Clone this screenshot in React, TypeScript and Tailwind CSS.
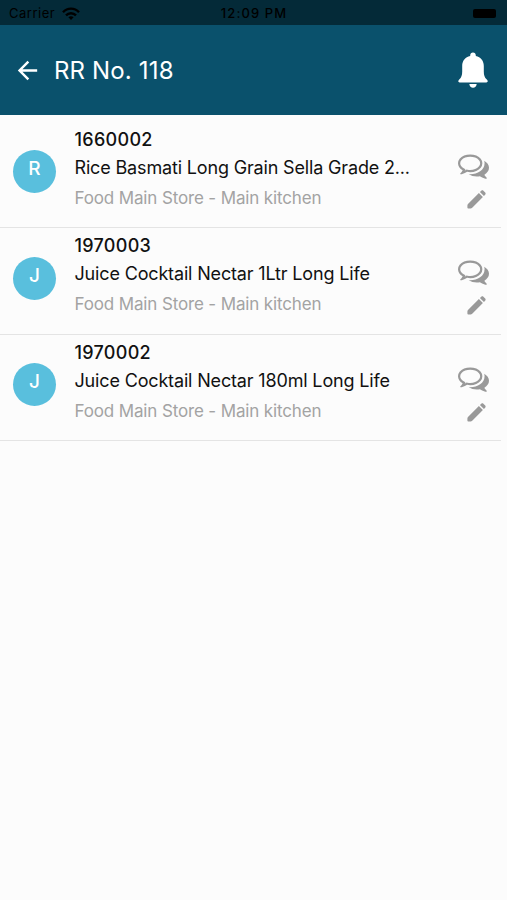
import { MdArrowBack } from "react-icons/md";

type Item = {
  code: string;
  name: string;
  route: string;
};

const items: Item[] = [
  { code: "1660002", name: "Rice Basmati Long Grain Sella Grade 2...", route: "Food Main Store - Main kitchen" },
  { code: "1970003", name: "Juice Cocktail Nectar 1Ltr Long Life", route: "Food Main Store - Main kitchen" },
  { code: "1970002", name: "Juice Cocktail Nectar 180ml Long Life", route: "Food Main Store - Main kitchen" },
];

function WifiIcon() {
  return (
    <svg width="18" height="13" viewBox="0 0 18 13" fill="none" stroke="currentColor" strokeWidth="2.4">
      <path d="M1 5.2C5.5 0.4 12.5 0.4 17 5.2" />
      <path d="M4 8.4C6.8 5.5 11.2 5.5 14 8.4" />
      <path d="M9 13L6.4 10.3C7.8 9 10.2 9 11.6 10.3Z" fill="currentColor" stroke="none" />
    </svg>
  );
}

function BellIcon() {
  return (
    <svg width="30" height="36" viewBox="0 0 30 36" fill="currentColor">
      <path d="M15 0.4C13.3 0.4 12.2 1.6 12.2 3.2V4.1C7.2 5.2 4.2 9 4.2 14V19.5C4.2 23.3 3.5 25.3 1.2 27.6C0.5 28.3 0.3 28.8 0.3 29.3C0.3 30 0.9 30.4 1.6 30.4H28.4C29.1 30.4 29.7 30 29.7 29.3C29.7 28.8 29.5 28.3 28.8 27.6C26.5 25.3 25.8 23.3 25.8 19.5V14C25.8 9 22.8 5.2 17.8 4.1V3.2C17.8 1.6 16.7 0.4 15 0.4Z" />
      <path d="M11.3 32H18.7C18.5 34.2 17 35.7 15 35.7C13 35.7 11.5 34.2 11.3 32Z" />
    </svg>
  );
}

function CommentsIcon() {
  return (
    <svg width="31" height="31" viewBox="0 0 1792 1792" fill="currentColor">
      <path d="M704 384q-153 0-286 52t-211.5 141-78.5 191q0 82 53 158t149 132l97 56-35 84q34-20 62-39l44-31 53 10q78 14 153 14 153 0 286-52t211.5-141 78.5-191-78.5-191-211.5-141-286-52zm0-128q191 0 353.5 68.5t256.5 186.5 94 257-94 257-256.5 186.5-353.5 68.5q-86 0-176-16-124 88-278 128-36 9-86 16h-3q-11 0-20.5-8t-11.5-21q-1-3-1-6.5t.5-6.5 2-6l2.5-5 3.5-5.5 4-5 4.5-5 4-4.5q5-6 23-25t26-29.5 22.5-29 25-38.5 20.5-44q-124-72-195-177t-71-224q0-139 94-257t256.5-186.5 353.5-68.5zm822 1169q10 24 20.5 44t25 38.5 22.5 29 26 29.5 23 25q1 1 4 4.5t4.5 5 4 5 3.5 5.5l2.5 5 2 6 .5 6.5-1 6.5q-3 14-13 22t-22 7q-50-7-86-16-154-40-278-128-90 16-176 16-271 0-472-132 58 4 88 4 161 0 309-45t264-129q125-92 192-212t67-254q0-77-23-152 129 71 204 178t75 230q0 120-71 224.5t-195 176.5z" />
    </svg>
  );
}

function PencilIcon() {
  return (
    <svg width="19" height="19" viewBox="0 0 19 19" fill="currentColor" className="mt-[9px] ml-[6px]">
      <path d="M11.9 3.1L15.9 7.1L5.2 17.8C4.7 18.3 4.2 18.6 3.6 18.6H1.6C0.9 18.6 0.4 18.1 0.4 17.4V15.4C0.4 14.8 0.7 14.3 1.2 13.8Z" />
      <path d="M12.9 2.1L14.3 0.8C14.9 0.2 15.8 0.2 16.4 0.8L18.2 2.6C18.8 3.2 18.8 4.1 18.2 4.7L16.9 6.1Z" />
    </svg>
  );
}

function StatusBar() {
  return (
    <div className="grid h-[25px] grid-cols-3 items-center bg-[#042a38] px-[9px] pt-[2px] text-[13px] text-black">
      <div className="flex items-center gap-[7px]">
        <span className="tracking-[0.5px]">Carrier</span>
        <WifiIcon />
      </div>
      <span className="pl-px text-center font-medium tracking-[1.1px]">12:09 PM</span>
      <div className="flex justify-end pr-[2px]">
        <div className="h-[9px] w-[23px] rounded-[2px] bg-black" />
      </div>
    </div>
  );
}

function ItemRow({ item }: { item: Item }) {
  return (
    <li className="mr-[6px] flex h-[106.67px] border-b border-[#e4e4e4] pl-[13px]">
      <div className="mt-[28.4px] flex size-[43px] shrink-0 items-center justify-center rounded-full bg-[#59bfdd] pb-[4px] text-[19px] font-medium text-white">
        {item.name[0]}
      </div>
      <div className="ml-[18.5px] min-w-0 flex-1 whitespace-nowrap pt-[4px]">
        <p className="text-[18px] leading-[28px] font-medium tracking-[0.3px] text-[#111]">{item.code}</p>
        <p className="text-[18px] leading-[28px] tracking-[-0.16px] text-[#111]">{item.name}</p>
        <p className="text-[17px] leading-[32px] tracking-[-0.14px] text-[#a3a3a3]">{item.route}</p>
      </div>
      <div className="mr-[12px] flex w-[31px] shrink-0 flex-col items-center pt-[28px] text-[#999]">
        <CommentsIcon />
        <PencilIcon />
      </div>
    </li>
  );
}

export default function App() {
  return (
    <div className="min-h-screen bg-[#fcfcfc] font-[Inter,sans-serif]">
      <StatusBar />
      <header className="flex h-[90px] items-center bg-[#0a516c] px-[13px] text-white">
        <button aria-label="Back">
          <MdArrowBack size={29} />
        </button>
        <h1 className="ml-[12px] flex-1 pt-[2px] text-[24px] tracking-[0.15px]">RR No. 118</h1>
        <button aria-label="Notifications" className="mr-[6px]">
          <BellIcon />
        </button>
      </header>
      <ul className="pt-[6.5px]">
        {items.map((item) => (
          <ItemRow key={item.code} item={item} />
        ))}
      </ul>
    </div>
  );
}
